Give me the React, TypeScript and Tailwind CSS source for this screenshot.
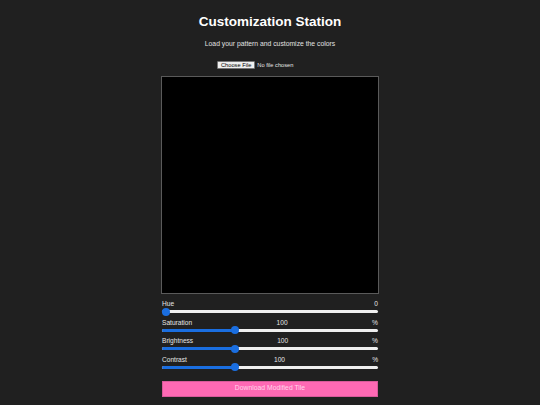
import React from "react";

function Slider({ label, value, max, unit }: { label: string; value: number; max: number; unit?: string }) {
  const f = value / max;
  return (
    <div className="flex flex-col">
      <div className="flex justify-between text-[6.6px] leading-[9px] text-[#e5e5e5] translate-y-[1px]">
        <span>{label}</span>
        <span>{value}</span>
        {unit ? <span>{unit}</span> : null}
      </div>
      <div className="relative h-[9px] flex items-center">
        <div className="h-[3px] w-full rounded-full bg-[#efefef] overflow-hidden">
          <div className="h-full bg-[#1a6ee0]" style={{ width: `calc(4px + (100% - 8px) * ${f})` }} />
        </div>
        <div
          className="absolute top-[0.5px] h-[8px] w-[8px] rounded-full bg-[#1a6ee0]"
          style={{ left: `calc((100% - 8px) * ${f})` }}
        />
      </div>
    </div>
  );
}

export default function App() {
  return (
    <div className="min-h-[405px] w-full bg-[#202020] flex flex-col items-center" style={{ fontFamily: '"Liberation Sans", Arial, sans-serif' }}>
      <h1 className="mt-[14px] text-[13.5px] leading-[16px] font-bold text-white">Customization Station</h1>
      <p className="mt-[10px] text-[6.8px] leading-[8px] text-[#e0e0e0]">Load your pattern and customize the colors</p>
      <div className="mt-[13px] w-[106px] flex items-center gap-[2px] text-[5.7px] leading-[7px] text-[#e5e5e5]">
        <span className="bg-[#efefef] text-black border border-[#767676] rounded-[1px] px-[3px] h-[8px] flex items-center whitespace-nowrap">Choose File</span>
        <span className="whitespace-nowrap">No file chosen</span>
      </div>
      <div className="mt-[7px] w-[218px] h-[218px] border border-[#5a5a5a] bg-black" />
      <div className="mt-[4px] w-[216px] flex flex-col gap-[0.5px]">
        <Slider label="Hue" value={0} max={360} />
        <Slider label="Saturation" value={100} max={300} unit="%" />
        <Slider label="Brightness" value={100} max={300} unit="%" />
        <Slider label="Contrast" value={100} max={300} unit="%" />
      </div>
      <button className="mt-[9px] w-[216px] h-[16px] bg-[#ff69b4] border border-[#d85a9a] text-[6.8px] text-[#ffd6ea] flex items-center justify-center">
        Download Modified Tile
      </button>
    </div>
  );
}
